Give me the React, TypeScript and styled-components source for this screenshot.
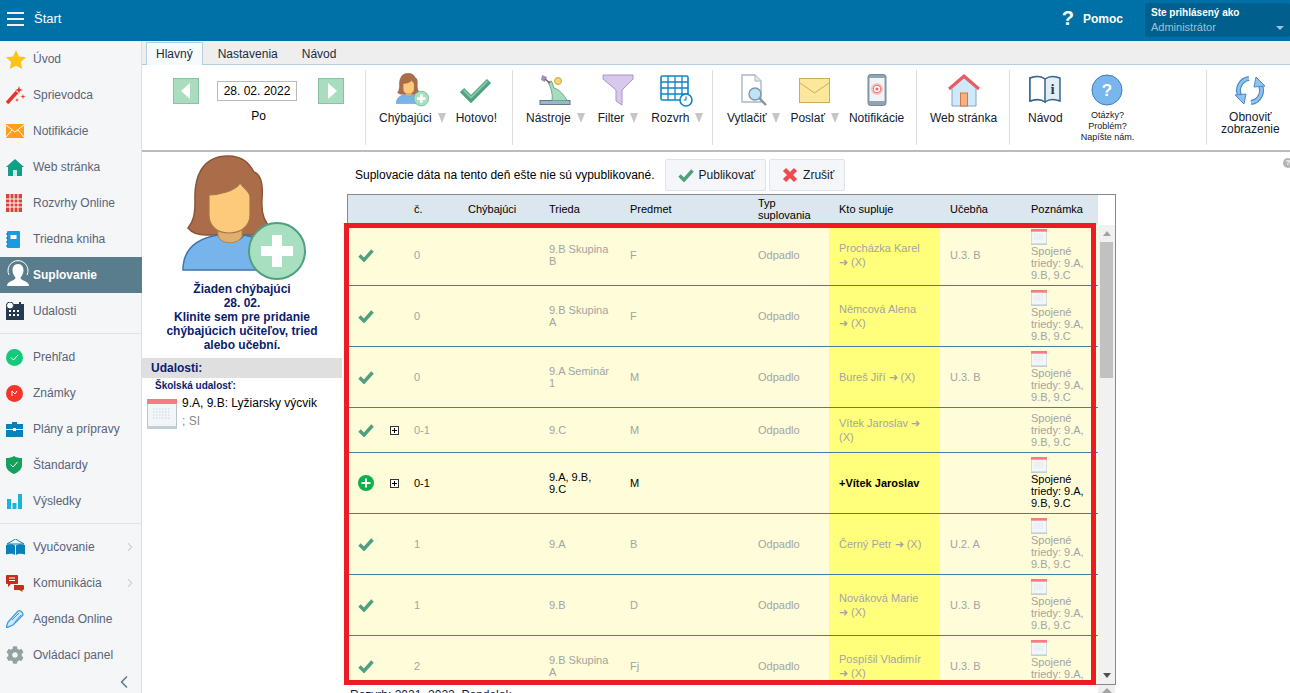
import React from 'react';
import styled, { createGlobalStyle } from 'styled-components';
import { ChevronLeft, ChevronRight } from 'lucide-react';
import { FaCog } from 'react-icons/fa';

const GlobalStyle = createGlobalStyle`
  html, body {
    margin: 0;
    height: 100%;
    overflow: hidden;
    background: #fff;
    font-family: "Liberation Sans", Arial, sans-serif;
    font-size: 12px;
    color: #000;
  }
  * { box-sizing: border-box; }
`;

const Page = styled.div`
  display: flex;
  flex-direction: column;
  height: 693px;
  overflow: hidden;
`;

/* top bar */
const TopBar = styled.header`
  flex: 0 0 41px;
  display: flex;
  align-items: center;
  padding-bottom: 4px;
  background: #0071a6;
  color: #fff;
`;

const Burger = styled.div`
  width: 17px;
  height: 14px;
  margin-left: 7px;
  border-top: 2px solid #e8f2f7;
  border-bottom: 2px solid #e8f2f7;
  position: relative;
  &::after {
    content: '';
    position: absolute;
    left: 0;
    right: 0;
    top: 4px;
    height: 2px;
    background: #e8f2f7;
  }
`;

const StartLabel = styled.span`
  margin-left: 10px;
  font-size: 13px;
`;

const HelpLink = styled.div`
  margin-left: auto;
  display: flex;
  align-items: center;
  font-weight: 700;
  font-size: 12px;
  b { font-size: 20px; margin-right: 9px; }
`;

const Account = styled.div`
  align-self: flex-end;
  position: relative;
  width: 145px;
  height: 34px;
  margin-left: 22px;
  padding: 3px 6px;
  background: #005f8c;
  border-radius: 2px;
  font-size: 11px;
  line-height: 14px;
  strong { display: block; font-size: 10px; }
  span { color: #9cc3d8; }
  &::after {
    content: '';
    position: absolute;
    right: 6px;
    top: 23px;
    border: 4px solid transparent;
    border-top: 4px solid #9cc3d8;
  }
`;

const Body = styled.div`
  flex: 1;
  display: flex;
  min-height: 0;
`;

/* side menu */
const Side = styled.nav`
  flex: 0 0 142px;
  background: #f5f6f8;
  border-right: 1px solid #dcdee1;
  display: flex;
  flex-direction: column;
`;

const SideItem = styled.div<{ $active?: boolean }>`
  height: 36px;
  display: flex;
  align-items: center;
  padding-left: 6px;
  font-size: 12px;
  color: ${p => (p.$active ? '#fff' : '#5a6478')};
  font-weight: ${p => (p.$active ? 700 : 400)};
  background: ${p => (p.$active ? '#5a7d8d' : 'transparent')};
  margin-right: ${p => (p.$active ? '-1px' : '0')};
`;

const SideIcon = styled.span`
  flex: 0 0 27px;
  display: flex;
  align-items: center;
  justify-content: flex-start;
`;

const SideArrow = styled(ChevronRight)`
  margin-left: auto;
  margin-right: 4px;
  color: #d0d3d6;
`;

const SideRule = styled.hr`
  margin: 4px 0 5px;
  border: 0;
  border-top: 1px solid #e0e2e5;
  height: 0;
`;

const SideCollapse = styled(ChevronLeft)`
  align-self: flex-end;
  margin: -1px 7px 0 0;
  color: #5f7d8c;
`;

/* right part */
const Work = styled.div`
  flex: 1;
  min-width: 0;
  display: flex;
  flex-direction: column;
`;

const TabBar = styled.div`
  flex: 0 0 24px;
  height: 24px;
  display: flex;
  padding: 1px 0 0 4px;
  background: #eee;
  border-bottom: 1px solid #b5cddd;
`;

const Tab = styled.div<{ $active?: boolean }>`
  height: ${p => (p.$active ? '23px' : '22px')};
  line-height: 22px;
  padding: 0 ${p => (p.$active ? '9px' : '11px')};
  margin-right: ${p => (p.$active ? '3px' : '0')};
  margin-bottom: ${p => (p.$active ? '-1px' : '0')};
  color: #1d2c3c;
  font-size: 12px;
  background: ${p => (p.$active ? '#f6fafd' : 'transparent')};
  border: ${p => (p.$active ? '1px solid #b5cddd' : '1px solid transparent')};
  border-bottom: 0;
`;

const Ribbon = styled.div`
  flex: 0 0 85px;
  display: flex;
  padding: 5px 0;
  background: #fff;
  box-shadow: 0 2px 0 #bcbcbc;
  position: relative;
  z-index: 1;
`;

const RibbonGroup = styled.div<{ $width: number; $pad: number; $gap?: number; $last?: boolean }>`
  flex: 0 0 ${p => p.$width}px;
  display: flex;
  align-items: flex-start;
  gap: ${p => p.$gap ?? 10}px;
  padding-left: ${p => p.$pad}px;
  border-right: ${p => (p.$last ? '0' : '1px solid #dedede')};
`;

const DateBlock = styled.div`
  width: 171px;
  margin-top: 8px;
  display: flex;
  flex-direction: column;
  align-items: center;
`;

const DateRow = styled.div`
  display: flex;
  align-items: center;
  justify-content: space-between;
  width: 100%;
`;

const DayArrow = styled.div<{ $next?: boolean }>`
  width: 26px;
  height: 26px;
  display: flex;
  align-items: center;
  justify-content: center;
  background: #aaddc0;
  border: 1px solid #86c3a0;
  &::before {
    content: '';
    border-top: 8px solid transparent;
    border-bottom: 8px solid transparent;
    ${p => (p.$next ? 'border-left: 9px solid #fff; margin-left: 2px;' : 'border-right: 9px solid #fff; margin-right: 2px;')}
  }
`;

const DateInput = styled.div`
  width: 80px;
  height: 20px;
  margin-right: 3px;
  line-height: 18px;
  text-align: center;
  border: 1px solid #bbb;
  font-size: 12px;
`;

const DayName = styled.div`
  margin-top: 5px;
  line-height: 14px;
`;

const Tool = styled.div`
  display: flex;
  flex-direction: column;
  align-items: center;
  padding-top: 3px;
`;

const ToolIcon = styled.div`
  height: 34px;
  display: flex;
  align-items: center;
  justify-content: center;
`;

const ToolLabel = styled.div`
  display: flex;
  align-items: center;
  margin-top: 4px;
  line-height: 14px;
  color: #14202e;
  white-space: nowrap;
`;

const ToolArrow = styled.i`
  margin-left: 6px;
  width: 0;
  height: 0;
  border-left: 4.5px solid transparent;
  border-right: 4.5px solid transparent;
  border-top: 10px solid #c6c6c6;
`;

const TinyLabel = styled.div`
  margin-top: 3px;
  text-align: center;
  font-size: 9px;
  line-height: 11px;
  color: #14202e;
`;

const WrapLabel = styled.div`
  margin-top: 4px;
  text-align: center;
  line-height: 12px;
  color: #14202e;
`;

const Content = styled.div`
  flex: 1;
  min-height: 0;
  display: flex;
  position: relative;
  overflow: hidden;
`;

const HelpDot = styled.span`
  position: absolute;
  right: -3px;
  top: 8px;
  width: 10px;
  height: 10px;
  border-radius: 50%;
  background: #b4b4b4;
  color: #fff;
  font-size: 8px;
  font-weight: 700;
  line-height: 10px;
  text-align: center;
`;

/* left panel */
const Absent = styled.aside`
  flex: 0 0 200px;
  padding-top: 5px;
`;

const Avatar = styled.div`
  padding-left: 40px;
  height: 125px;
`;

const AbsentText = styled.div`
  margin-top: 2px;
  text-align: center;
  font-weight: 700;
  line-height: 14px;
  color: #0b1d6e;
`;

const EventsHead = styled.div`
  margin-top: 6px;
  height: 20px;
  line-height: 20px;
  padding-left: 9px;
  background: #dfdfdf;
  color: #0b1d6e;
  font-weight: 700;
  font-size: 12px;
`;

const EventsKind = styled.div`
  padding: 1px 0 0 13px;
  font-size: 10px;
  font-weight: 700;
  line-height: 14px;
  color: #0b1d6e;
`;

const EventRow = styled.div`
  display: flex;
  gap: 5px;
  margin-top: 1px;
  padding-left: 5px;
`;

const EventIcon = styled.div`
  margin-top: 5px;
`;

const EventText = styled.div`
  line-height: 18px;
  span { display: block; color: #888; }
`;

/* table */
const Main = styled.main`
  flex: 1;
  min-width: 0;
  padding: 9px 0 0 5px;
`;

const Notice = styled.div`
  display: flex;
  align-items: center;
  height: 32px;
  padding-left: 8px;
`;

const NoticeText = styled.span`
  margin-right: 10px;
  font-size: 12px;
`;

const ActionButton = styled.button`
  height: 32px;
  margin-right: 3px;
  padding: 0 10px 0 12px;
  display: flex;
  align-items: center;
  gap: 5px;
  background: #f4f6f9;
  border: 1px solid #dfe2e6;
  border-radius: 2px;
  font: inherit;
  color: #14202e;
`;

const TableArea = styled.div`
  position: relative;
  width: 769px;
  margin-top: 3px;
`;

const TableBox = styled.div`
  display: flex;
  height: 491px;
  border: 1px solid #888;
  overflow: hidden;
`;

const TableClip = styled.div`
  flex: 0 0 750px;
  overflow: hidden;
`;

const Grid = styled.table`
  width: 750px;
  table-layout: fixed;
  border-collapse: collapse;
  font-size: 11px;
  line-height: 12px;
`;

const HeadCell = styled.th`
  height: 30px;
  padding: 0 6px 2px 10px;
  background: #dbe6ee;
  font-weight: 400;
  text-align: left;
`;

const Row = styled.tr<{ $live?: boolean }>`
  background: #fefcd9;
  color: ${p => (p.$live ? '#000' : '#a4a4a4')};
  border-bottom: 1px solid #4c7aa8;
`;

const Cell = styled.td`
  padding: 4px 10px 4px 10px;
  vertical-align: middle;
`;

const WhoCell = styled(Cell)<{ $live?: boolean }>`
  padding-right: 12px;
  background: #ffff7c;
  line-height: 14px;
  font-weight: ${p => (p.$live ? 700 : 400)};
`;

const NoteCell = styled(Cell)`
  padding-right: 4px;
`;

const NoteIcon = styled.div`
  height: 16px;
`;

const ExpandBox = styled.span`
  display: block;
  position: relative;
  width: 9px;
  height: 9px;
  border: 1px solid #333;
  background: #fff;
  &::before, &::after {
    content: '';
    position: absolute;
    background: #000;
  }
  &::before { left: 1px; right: 1px; top: 3px; height: 1px; }
  &::after { top: 1px; bottom: 1px; left: 3px; width: 1px; }
`;

const MarkCell = styled.td`
  padding: 0 0 0 10px;
  vertical-align: middle;
  line-height: 0;
`;

const Frame = styled.div`
  position: absolute;
  left: -3px;
  top: 29px;
  width: 752px;
  height: 462px;
  border: 5px solid #ed1c24;
  pointer-events: none;
`;

const Scrollbar = styled.div`
  flex: 0 0 17px;
  margin-top: 30px;
  display: flex;
  flex-direction: column;
  align-items: center;
  background: #f1f1f1;
`;

const ScrollStep = styled.i<{ $down?: boolean }>`
  flex: 0 0 5px;
  width: 0;
  height: 0;
  margin-top: ${p => (p.$down ? 'auto' : '6px')};
  margin-bottom: ${p => (p.$down ? '6px' : '0')};
  border-left: 4px solid transparent;
  border-right: 4px solid transparent;
  ${p => (p.$down ? 'border-top: 5px solid #505050;' : 'border-bottom: 5px solid #a3a3a3;')}
`;

const ScrollThumb = styled.div`
  width: 13px;
  height: 136px;
  margin-top: 6px;
  background: #c1c1c1;
`;

const Footer = styled.div`
  display: flex;
  width: 768px;
  height: 10px;
  overflow: hidden;
`;

const FooterText = styled.div`
  flex: 1;
  padding: 3px 0 0 3px;
  line-height: 14px;
  color: #0b1d4e;
`;

const FooterScroll = styled.div`
  flex: 0 0 17px;
  background: #efefef;
  display: flex;
  justify-content: center;
  padding-top: 3px;
  &::before {
    content: '';
    width: 0;
    height: 0;
    border-left: 5px solid transparent;
    border-right: 5px solid transparent;
    border-bottom: 5px solid #a3a3a3;
  }
`;

/* drawings */
const Person = ({ size }: { size: number }) => (
  <svg width={size} height={size * 125 / 124} viewBox="0 0 124 125">
    <path d="M46 1C62 1 68 10 72 17C80 20 81 32 80 44C79 58 82 68 90 74L70 80H24C16 80 10 78 6 73C12 66 13 58 13 46C12 22 20 1 46 1Z" fill="#ab6c4a" stroke="#8a5538" strokeWidth="1.5" />
    <path d="M1 115C1 92 18 83 36 80C40 88 58 88 62 80C80 83 95 92 95 115Z" fill="#78b4ec" stroke="#3e74ad" strokeWidth="1.5" />
    <path d="M36 70h24v11c-3 9-21 9-24 0z" fill="#e0ae6e" stroke="#b5834c" />
    <path d="M27 40C36 40 54 36 58 28C62 34 68 36 68 42V60C68 72 58 78 47 78C36 78 27 72 27 60Z" fill="#fdc97b" stroke="#a4774a" strokeWidth="1.2" />
    <circle cx="95" cy="96" r="28" fill="#a8dfc0" stroke="#4f9f80" strokeWidth="2" />
    <path d="M90 80h10v11h11v10h-11v11H90v-11H79V91h11z" fill="#fff" />
  </svg>
);

const Check = ({ w = 16, h = 14, color = '#4f9f80' }: { w?: number; h?: number; color?: string }) => (
  <svg width={w} height={h} viewBox="0 0 16 14">
    <path d="M1.500 7.500L6 12L14.500 2.500" fill="none" stroke={color} strokeWidth="3.400" />
  </svg>
);

const BigCheck = () => (
  <svg width="32" height="26" viewBox="0 0 32 26">
    <path d="M2 13L11 22L29 4" fill="none" stroke="#4f9f80" strokeWidth="6" />
    <path d="M3.500 13L11 20.500L27.500 4" fill="none" stroke="#7cc7a4" strokeWidth="2" />
  </svg>
);

const Cross = () => (
  <svg width="16" height="16" viewBox="0 0 16 16">
    <path d="M2.500 2.500L13.500 13.500M13.500 2.500L2.500 13.500" stroke="#ee4b50" strokeWidth="4.400" />
  </svg>
);

const AddMark = () => (
  <svg width="16" height="16" viewBox="0 0 16 16">
    <circle cx="8" cy="8" r="8" fill="#0cb14b" />
    <path d="M3.500 8h9M8 3.500v9" stroke="#fff" strokeWidth="2" />
  </svg>
);

const CalendarIcon = ({ size }: { size: number }) => (
  <svg width={size} height={size} viewBox="0 0 30 30">
    <rect x="0.500" y="0.500" width="29" height="29" fill="#f2f6f9" stroke="#b9c5cd" />
    <rect x="0" y="0" width="30" height="5" fill="#f37d80" />
    <path d="M6 10h18M6 13h18M6 16h18M6 19h18" stroke="#d9e0e6" strokeWidth="1.500" strokeDasharray="1.500 1.500" />
    <rect x="0" y="27" width="30" height="3" fill="#c3ced6" />
  </svg>
);

const FilterIcon = () => (
  <svg width="32" height="32" viewBox="0 0 32 32">
    <path d="M1 1H31V5L20 16V31L14 27V16L1 5Z" fill="#d8c9ec" stroke="#a896c4" />
  </svg>
);

const ToolsIcon = () => (
  <svg width="32" height="32" viewBox="0 0 32 32">
    <rect x="1" y="26.500" width="30" height="4" fill="#9fb6c6" stroke="#5f7a8c" />
    <path d="M9 8L12.500 7L15 14C21 16 25 21 28 26.500H13C14 20 12 14 9 8Z" fill="#a5dcbc" stroke="#6ba88a" />
    <circle cx="19" cy="7" r="3.500" fill="#f7d774" stroke="#c9a642" />
    <path d="M3 1L8 3L6 8L2 6Z" fill="#a58fc0" />
    <path d="M6 5L11 9" stroke="#8a5538" strokeWidth="1.500" />
  </svg>
);

const TimetableIcon = () => (
  <svg width="34" height="34" viewBox="0 0 34 34">
    <rect x="1" y="3" width="27" height="24" rx="1.500" fill="#fff" stroke="#1085c6" strokeWidth="1.600" />
    <path d="M1 9H28M1 15H28M1 21H28M8 3V27M15 3V27M22 3V27" stroke="#1085c6" strokeWidth="1.300" />
    <circle cx="26" cy="27" r="6" fill="#fff" stroke="#1085c6" strokeWidth="1.600" />
    <path d="M26 23.500V27H23.500" fill="none" stroke="#1085c6" strokeWidth="1.200" />
  </svg>
);

const PrintIcon = () => (
  <svg width="28" height="32" viewBox="0 0 28 32">
    <path d="M2 1H15L21 7V28H2Z" fill="#fff" stroke="#a9b8c2" strokeWidth="1.400" />
    <path d="M15 1V7H21" fill="#dfe6ea" stroke="#a9b8c2" />
    <circle cx="15" cy="20" r="6" fill="#bfe3f7" stroke="#7f96a5" strokeWidth="1.400" />
    <path d="M19.500 24.500L26 31" stroke="#7f96a5" strokeWidth="2.400" />
  </svg>
);

const MailIcon = () => (
  <svg width="31" height="25" viewBox="0 0 31 25">
    <rect x="0.500" y="0.500" width="30" height="24" fill="#fde79a" stroke="#d0aa5c" />
    <path d="M1 5L15.500 15L30 5" fill="none" stroke="#d0aa5c" />
  </svg>
);

const PhoneIcon = () => (
  <svg width="20" height="32" viewBox="0 0 20 32">
    <rect x="1" y="0.500" width="18" height="31" rx="2.500" fill="#8fa3b1" stroke="#76899a" />
    <rect x="2.500" y="4" width="15" height="23" fill="#f0f4f7" />
    <circle cx="10" cy="15" r="6" fill="#f6c3c0" />
    <circle cx="10" cy="15" r="3.800" fill="#fff" stroke="#e66e69" />
    <circle cx="10" cy="15" r="1.600" fill="#e66e69" />
  </svg>
);

const WebIcon = () => (
  <svg width="32" height="33" viewBox="0 0 32 33">
    <path d="M4 14L16 4L28 14V32H4Z" fill="#cfe9f8" stroke="#7fa8c4" />
    <path d="M1 15L16 2L31 15" fill="none" stroke="#ee5a60" strokeWidth="3" />
    <rect x="12.500" y="19" width="7" height="13" fill="#f6b183" stroke="#c97a4a" />
  </svg>
);

const GuideIcon = () => (
  <svg width="32" height="30" viewBox="0 0 32 30">
    <path d="M16 4C12 1 6 1 1 3V26C6 24 12 24 16 27C20 24 26 24 31 26V3C26 1 20 1 16 4Z" fill="#e2edf4" stroke="#35648e" strokeWidth="1.500" />
    <path d="M1 3C6 1 12 1 16 4V27C12 24 6 24 1 26Z" fill="#fff" stroke="#35648e" strokeWidth="1.500" />
    <text x="23.500" y="19" textAnchor="middle" fontFamily="Liberation Serif, serif" fontWeight="700" fontSize="15" fill="#33404c">i</text>
  </svg>
);

const QuestionIcon = () => (
  <svg width="32" height="32" viewBox="0 0 32 32">
    <circle cx="16" cy="16" r="15" fill="#7ab6ee" stroke="#3f7cb8" />
    <text x="16" y="22" textAnchor="middle" fontFamily="Liberation Sans, sans-serif" fontWeight="700" fontSize="17" fill="#fff">?</text>
  </svg>
);

const RefreshIcon = () => (
  <svg width="32" height="33" viewBox="0 0 32 33">
    <g fill="none">
      <path d="M15 4.500A12 12 0 0 0 6.500 23" stroke="#4a8ccb" strokeWidth="5" />
      <path d="M15 4.500A12 12 0 0 0 6.500 23" stroke="#8fc3ee" strokeWidth="2.600" />
      <path d="M17 28.500A12 12 0 0 0 25.500 10" stroke="#4a8ccb" strokeWidth="5" />
      <path d="M17 28.500A12 12 0 0 0 25.500 10" stroke="#8fc3ee" strokeWidth="2.600" />
    </g>
    <path d="M1 21L12 20L10 30Z" fill="#8fc3ee" stroke="#4a8ccb" />
    <path d="M31 12L20 13L22 3Z" fill="#8fc3ee" stroke="#4a8ccb" />
  </svg>
);

const StarIcon = () => (
  <svg width="20" height="19" viewBox="0 0 20 19"><path d="M10 0l3 6.400 7 .9-5.100 4.800 1.300 6.900L10 15.700 3.800 19l1.300-6.900L0 7.300l7-.9z" fill="#fcc419" /></svg>
);
const WandIcon = () => (
  <svg width="20" height="20" viewBox="0 0 20 20">
    <path d="M1 18L11 7" stroke="#e8342a" strokeWidth="3.500" />
    <path d="M13 1l1 3 3 1-3 1-1 3-1-3-3-1 3-1zM17 9l.6 2 2 .6-2 .6-.6 2-.6-2-2-.6 2-.6zM11 13l.5 1.500 1.500.5-1.500.5-.5 1.500-.5-1.500L9 15l1.500-.5z" fill="#e8342a" />
  </svg>
);
const MailSide = () => (
  <svg width="18" height="14" viewBox="0 0 18 14">
    <rect width="18" height="14" fill="#ff9f1c" />
    <path d="M0 1l9 7 9-7M0 13l6-7M18 13l-6-7" fill="none" stroke="#fff" />
  </svg>
);
const HouseSide = () => (
  <svg width="18" height="17" viewBox="0 0 18 17">
    <path d="M9 0l9 8h-2v9H2V8H0z" fill="#10a08a" />
    <rect x="7" y="11" width="4" height="6" fill="#c6ece5" />
  </svg>
);
const GridSide = () => (
  <svg width="16" height="18" viewBox="0 0 16 18">
    <rect width="16" height="18" fill="#d9433c" />
    <path d="M0 5h16M0 9h16M0 13h16M4 0v18M8 0v18M12 0v18" stroke="#fff" />
  </svg>
);
const NoteSide = () => (
  <svg width="14" height="17" viewBox="0 0 14 17">
    <rect x="1" width="13" height="17" rx="1" fill="#1a9ae0" />
    <rect x="4.500" y="4" width="6" height="4" fill="#fff" />
    <path d="M0 3h2M0 7h2M0 11h2M0 15h2" stroke="#0c6aa0" />
  </svg>
);
const SubstituteSide = () => (
  <svg width="24" height="32" viewBox="0 0 24 32">
    <path d="M3 16a10 10 0 1 1 18 0" fill="none" stroke="#fff" strokeWidth="1" />
    <path d="M12 5c4 0 5.500 3 5.500 6.500 0 3-2 6-3 7 0 2 2 2.500 5 4 2 1 3.500 2 3.500 4.500H1c0-2.500 1.500-3.500 3.500-4.500 3-1.500 5-2 5-4-1-1-3-4-3-7C6.500 8 8 5 12 5z" fill="#fff" />
  </svg>
);
const EventsSide = () => (
  <svg width="18" height="18" viewBox="0 0 18 18">
    <rect y="2" width="18" height="16" fill="#253a4e" />
    <path d="M3 8h2v2H3zM7 8h2v2H7zM11 8h2v2h-2zM3 12h2v2H3zM7 12h2v2H7zM11 12h2v2h-2z" fill="#fff" />
    <circle cx="4" cy="3.500" r="3.500" fill="#fff" stroke="#253a4e" />
    <rect x="13" width="2" height="4" fill="#253a4e" />
  </svg>
);
const OverviewSide = () => (
  <svg width="17" height="17" viewBox="0 0 17 17">
    <circle cx="8.500" cy="8.500" r="8.500" fill="#15c97a" />
    <path d="M5 8.500l2.500 2.500 4.500-5" fill="none" stroke="#fff" />
  </svg>
);
const GradesSide = () => (
  <svg width="17" height="17" viewBox="0 0 17 17">
    <circle cx="8.500" cy="8.500" r="8.500" fill="#f5352a" />
    <path d="M6 11V6l3 3 2-3" fill="none" stroke="#fff" />
  </svg>
);
const CaseSide = () => (
  <svg width="17" height="15" viewBox="0 0 17 15">
    <path d="M6 2V0h5v2h6v13H0V2z" fill="#0a7fb8" />
    <path d="M0 7.500h17" stroke="#fff" />
    <rect x="7" y="6" width="3" height="3" fill="#fff" />
  </svg>
);
const ShieldSide = () => (
  <svg width="16" height="18" viewBox="0 0 16 18">
    <path d="M8 0c2 1.500 5 2 8 2v7c0 4-3 7-8 9-5-2-8-5-8-9V2c3 0 6-.5 8-2z" fill="#16a05d" />
    <path d="M4.500 8.500L7 11l4.500-5" fill="none" stroke="#fff" />
  </svg>
);
const BarsSide = () => (
  <svg width="16" height="16" viewBox="0 0 16 16">
    <path d="M1 6h4v10H1zM6.500 10h4v6h-4zM12 1h4v15h-4z" fill="#18b5d8" />
  </svg>
);
const BookSide = () => (
  <svg width="19" height="17" viewBox="0 0 19 17">
    <path d="M9.500 0L18 5H1z" fill="none" stroke="#0a7fb8" />
    <path d="M0 6c3-1 7-1 9 .5V16c-2-1.500-6-1.500-9-.5zM19 6c-3-1-7-1-9 .5V16c2-1.500 6-1.500 9-.5z" fill="#0a7fb8" />
  </svg>
);
const ChatSide = () => (
  <svg width="18" height="17" viewBox="0 0 18 17">
    <path d="M1 0h10a1 1 0 0 1 1 1v7a1 1 0 0 1-1 1H5l-3 3V9H1a1 1 0 0 1-1-1V1a1 1 0 0 1 1-1z" fill="#d0281c" />
    <path d="M8 10h9a1 1 0 0 1 1 1v3a1 1 0 0 1-1 1h-1l1 2-4-2H8z" fill="#d0281c" />
    <path d="M3 3h6M3 5.500h6" stroke="#fff" />
  </svg>
);
const PenSide = () => (
  <svg width="18" height="18" viewBox="0 0 18 18">
    <path d="M0 18l2-6L12 1c2-1 5 1 5 4L7 15z" fill="#cfe8f8" stroke="#3d9ade" strokeWidth="1.300" />
    <path d="M6 10l7-7M9 12l6-7" stroke="#3d9ade" />
  </svg>
);

const mainMenu: [string, React.ReactNode][] = [
  ['Úvod', <StarIcon />],
  ['Sprievodca', <WandIcon />],
  ['Notifikácie', <MailSide />],
  ['Web stránka', <HouseSide />],
  ['Rozvrhy Online', <GridSide />],
  ['Triedna kniha', <NoteSide />],
  ['Suplovanie', <SubstituteSide />],
  ['Udalosti', <EventsSide />],
];

const teachMenu: [string, React.ReactNode][] = [
  ['Prehľad', <OverviewSide />],
  ['Známky', <GradesSide />],
  ['Plány a prípravy', <CaseSide />],
  ['Štandardy', <ShieldSide />],
  ['Výsledky', <BarsSide />],
];

const moreMenu: [string, React.ReactNode, boolean][] = [
  ['Vyučovanie', <BookSide />, true],
  ['Komunikácia', <ChatSide />, true],
  ['Agenda Online', <PenSide />, false],
  ['Ovládací panel', <FaCog size={18} color="#93a0a5" />, false],
];

const columns = [32, 24, 54, 81, 81, 128, 81, 111, 81, 77];

const headers = ['', '', 'č.', 'Chýbajúci', 'Trieda', 'Predmet', 'Typ suplovania', 'Kto supluje', 'Učebňa', 'Poznámka'];

type Sub = {
  live?: boolean;
  expand?: boolean;
  num: string;
  group: string;
  subject: string;
  who: string;
  room?: string;
  bare?: boolean;
};

const rows: Sub[] = [
  { num: '0', group: '9.B Skupina B', subject: 'F', who: 'Procházka Karel ➜ (X)', room: 'U.3. B' },
  { num: '0', group: '9.B Skupina A', subject: 'F', who: 'Němcová Alena ➜ (X)' },
  { num: '0', group: '9.A Seminár 1', subject: 'M', who: 'Bureš Jiří ➜ (X)', room: 'U.3. B' },
  { num: '0-1', group: '9.C', subject: 'M', who: 'Vítek Jaroslav ➜ (X)', expand: true, bare: true },
  { num: '0-1', group: '9.A, 9.B, 9.C', subject: 'M', who: '+Vítek Jaroslav', expand: true, live: true },
  { num: '1', group: '9.A', subject: 'B', who: 'Černý Petr ➜ (X)', room: 'U.2. A' },
  { num: '1', group: '9.B', subject: 'D', who: 'Nováková Marie ➜ (X)', room: 'U.3. B' },
  { num: '2', group: '9.B Skupina A', subject: 'Fj', who: 'Pospíšil Vladimír ➜ (X)', room: 'U.3. B' },
];

const App: React.FC = () => (
  <>
    <GlobalStyle />
    <Page>
      <TopBar>
        <Burger />
        <StartLabel>Štart</StartLabel>
        <HelpLink><b>?</b>Pomoc</HelpLink>
        <Account>
          <strong>Ste prihlásený ako</strong>
          <span>Administrátor</span>
        </Account>
      </TopBar>

      <Body>
        <Side>
          {mainMenu.map(([label, icon]) => (
            <SideItem key={label} $active={label === 'Suplovanie'}>
              <SideIcon>{icon}</SideIcon>
              {label}
            </SideItem>
          ))}
          <SideRule />
          {teachMenu.map(([label, icon]) => (
            <SideItem key={label}>
              <SideIcon>{icon}</SideIcon>
              {label}
            </SideItem>
          ))}
          <SideRule />
          {moreMenu.map(([label, icon, more]) => (
            <SideItem key={label}>
              <SideIcon>{icon}</SideIcon>
              {label}
              {more && <SideArrow size={14} />}
            </SideItem>
          ))}
          <SideCollapse size={20} />
        </Side>

        <Work>
          <TabBar>
            <Tab $active>Hlavný</Tab>
            <Tab>Nastavenia</Tab>
            <Tab>Návod</Tab>
          </TabBar>

          <Ribbon>
            <RibbonGroup $width={224} $pad={31}>
              <DateBlock>
                <DateRow>
                  <DayArrow />
                  <DateInput>28. 02. 2022</DateInput>
                  <DayArrow $next />
                </DateRow>
                <DayName>Po</DayName>
              </DateBlock>
            </RibbonGroup>
            <RibbonGroup $width={147} $pad={13}>
              <Tool>
                <ToolIcon><Person size={33} /></ToolIcon>
                <ToolLabel>Chýbajúci<ToolArrow /></ToolLabel>
              </Tool>
              <Tool>
                <ToolIcon><BigCheck /></ToolIcon>
                <ToolLabel>Hotovo!</ToolLabel>
              </Tool>
            </RibbonGroup>
            <RibbonGroup $width={200} $pad={13} $gap={13}>
              <Tool>
                <ToolIcon><ToolsIcon /></ToolIcon>
                <ToolLabel>Nástroje<ToolArrow /></ToolLabel>
              </Tool>
              <Tool>
                <ToolIcon><FilterIcon /></ToolIcon>
                <ToolLabel>Filter<ToolArrow /></ToolLabel>
              </Tool>
              <Tool>
                <ToolIcon><TimetableIcon /></ToolIcon>
                <ToolLabel>Rozvrh<ToolArrow /></ToolLabel>
              </Tool>
            </RibbonGroup>
            <RibbonGroup $width={204} $pad={14} $gap={10}>
              <Tool>
                <ToolIcon><PrintIcon /></ToolIcon>
                <ToolLabel>Vytlačiť<ToolArrow /></ToolLabel>
              </Tool>
              <Tool>
                <ToolIcon><MailIcon /></ToolIcon>
                <ToolLabel>Poslať<ToolArrow /></ToolLabel>
              </Tool>
              <Tool>
                <ToolIcon><PhoneIcon /></ToolIcon>
                <ToolLabel>Notifikácie</ToolLabel>
              </Tool>
            </RibbonGroup>
            <RibbonGroup $width={93} $pad={13}>
              <Tool>
                <ToolIcon><WebIcon /></ToolIcon>
                <ToolLabel>Web stránka</ToolLabel>
              </Tool>
            </RibbonGroup>
            <RibbonGroup $width={197} $pad={18} $gap={18}>
              <Tool>
                <ToolIcon><GuideIcon /></ToolIcon>
                <ToolLabel>Návod</ToolLabel>
              </Tool>
              <Tool>
                <ToolIcon><QuestionIcon /></ToolIcon>
                <TinyLabel>Otázky?<br />Problém?<br />Napíšte nám.</TinyLabel>
              </Tool>
            </RibbonGroup>
            <RibbonGroup $width={83} $pad={14} $last>
              <Tool>
                <ToolIcon><RefreshIcon /></ToolIcon>
                <WrapLabel>Obnoviť<br />zobrazenie</WrapLabel>
              </Tool>
            </RibbonGroup>
          </Ribbon>

          <Content>
            <HelpDot>?</HelpDot>
            <Absent>
              <Avatar><Person size={124} /></Avatar>
              <AbsentText>
                Žiaden chýbajúci<br />
                28. 02.<br />
                Klinite sem pre pridanie<br />
                chýbajúcich učiteľov, tried<br />
                alebo učební.
              </AbsentText>
              <EventsHead>Udalosti:</EventsHead>
              <EventsKind>Školská udalosť:</EventsKind>
              <EventRow>
                <EventIcon><CalendarIcon size={30} /></EventIcon>
                <EventText>
                  9.A, 9.B: Lyžiarsky výcvik
                  <span>; SI</span>
                </EventText>
              </EventRow>
            </Absent>

            <Main>
              <Notice>
                <NoticeText>Suplovacie dáta na tento deň ešte nie sú vypublikované.</NoticeText>
                <ActionButton><Check />Publikovať</ActionButton>
                <ActionButton><Cross />Zrušiť</ActionButton>
              </Notice>

              <TableArea>
                <TableBox>
                  <TableClip>
                    <Grid>
                      <colgroup>
                        {columns.map((w, i) => <col key={i} width={w} />)}
                      </colgroup>
                      <thead>
                        <tr>
                          {headers.map((h, i) => <HeadCell key={i}>{h}</HeadCell>)}
                        </tr>
                      </thead>
                      <tbody>
                        {rows.map((r, i) => (
                          <Row key={i} $live={r.live}>
                            <MarkCell>{r.live ? <AddMark /> : <Check />}</MarkCell>
                            <MarkCell>{r.expand && <ExpandBox />}</MarkCell>
                            <Cell>{r.num}</Cell>
                            <Cell />
                            <Cell>{r.group}</Cell>
                            <Cell>{r.subject}</Cell>
                            <Cell>{r.live ? '' : 'Odpadlo'}</Cell>
                            <WhoCell $live={r.live}>{r.who}</WhoCell>
                            <Cell>{r.room}</Cell>
                            <NoteCell>
                              {!r.bare && <NoteIcon><CalendarIcon size={16} /></NoteIcon>}
                              Spojené triedy: 9.A, 9.B, 9.C
                            </NoteCell>
                          </Row>
                        ))}
                      </tbody>
                    </Grid>
                  </TableClip>
                  <Scrollbar>
                    <ScrollStep />
                    <ScrollThumb />
                    <ScrollStep $down />
                  </Scrollbar>
                </TableBox>
                <Frame />
              </TableArea>

              <Footer>
                <FooterText>Rozvrh: 2021, 2022, Pondelok</FooterText>
                <FooterScroll />
              </Footer>
            </Main>
          </Content>
        </Work>
      </Body>
    </Page>
  </>
);

export default App;
